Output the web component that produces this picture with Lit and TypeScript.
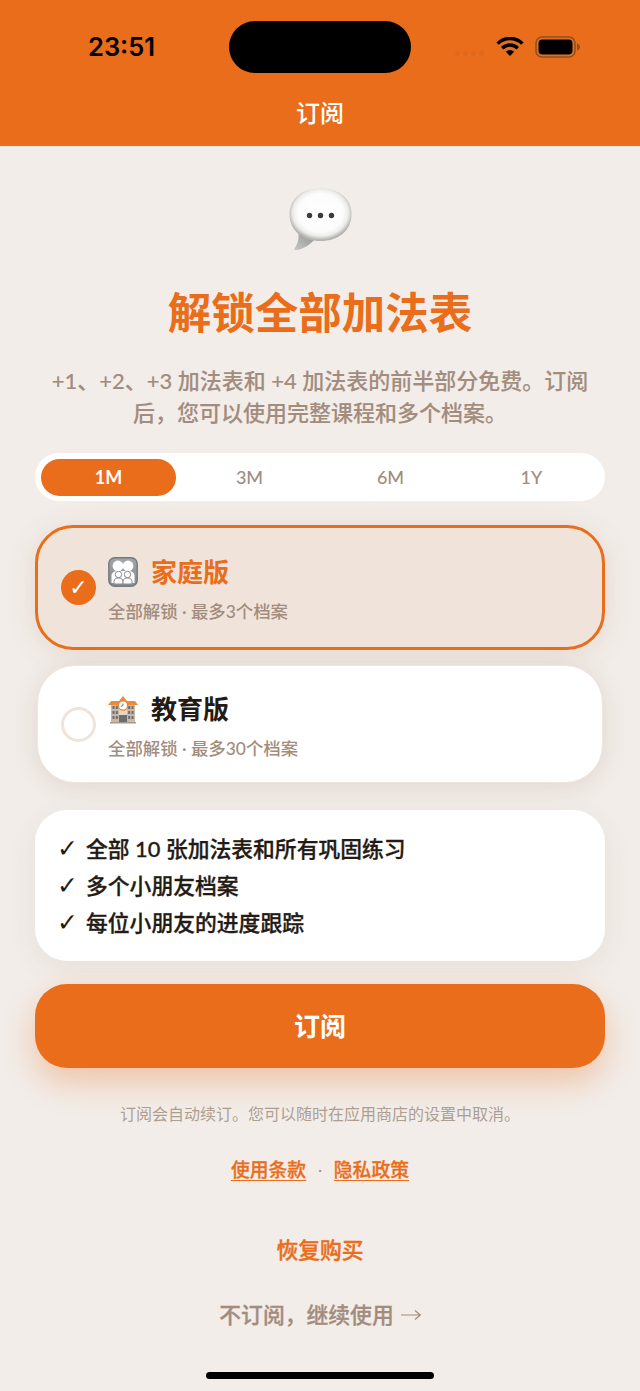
import { LitElement, html, css, svg } from 'lit';
import { customElement, state } from 'lit/decorators.js';

const bubble = svg`
  <defs>
    <radialGradient id="bub" cx="50%" cy="46%" r="52%">
      <stop offset="0" stop-color="#fff"/>
      <stop offset=".7" stop-color="#fcfcfc"/>
      <stop offset=".86" stop-color="#ececea"/>
      <stop offset="1" stop-color="#b3b3b0"/>
    </radialGradient>
    <linearGradient id="tail" x1="0" y1="1" x2=".8" y2="0">
      <stop offset="0" stop-color="#c6c6c3"/>
      <stop offset="1" stop-color="#8d8f8c"/>
    </linearGradient>
  </defs>
  <path d="M9 40 C10.500 50 9 56 5.500 60.500 C5 61.500 5.500 62 6.500 62 C14 61.500 21 57 27 50 Z" fill="url(#tail)"/>
  <path d="M31.500 0.500 C49 0.500 62.500 10 62.500 26 C62.500 43 49 53 31.500 53 C14 53 0.500 43 0.500 26 C0.500 10 14 0.500 31.500 0.500 Z" fill="url(#bub)"/>
  <circle cx="20.500" cy="27.500" r="2.700" fill="#3e3a39"/>
  <circle cx="31.500" cy="27.500" r="2.700" fill="#3e3a39"/>
  <circle cx="42.500" cy="27.500" r="2.700" fill="#3e3a39"/>
`;

const family = svg`
  <defs>
    <linearGradient id="fam" x1="0" y1="0" x2="0" y2="1">
      <stop offset="0" stop-color="#a4a6a8"/>
      <stop offset="1" stop-color="#868b8f"/>
    </linearGradient>
  </defs>
  <rect x=".8" y=".8" width="28.400" height="28.400" rx="6" fill="url(#fam)" stroke="#757a7e" stroke-width="1.400"/>
  <g fill="#fff">
    <circle cx="10" cy="9" r="5.400"/>
    <circle cx="20" cy="9" r="5.400"/>
    <path d="M3.500 26 V19 C3.500 15.500 6 14 10 14 H20 C24 14 26.500 15.500 26.500 19 V26 Z"/>
  </g>
  <g fill="#fff" stroke="#868b8f" stroke-width="1">
    <circle cx="10.500" cy="17.500" r="3.200"/>
    <circle cx="19.500" cy="17.500" r="3.200"/>
    <path d="M6 27 V24.500 C6 22 8 21 10.500 21 C13 21 15 22 15 24.500 V27 Z"/>
    <path d="M15 27 V24.500 C15 22 17 21 19.500 21 C22 21 24 22 24 24.500 V27 Z"/>
  </g>
`;

const school = svg`
  <rect x="3" y="9" width="24" height="20" fill="#c9b9a8"/>
  <rect x="11" y="7" width="8" height="22" fill="#e3d6c6"/>
  <path d="M0 11 L3 7 H11 L15 2 L19 7 H27 L30 11 Z" fill="#ee8a3c"/>
  <circle cx="15" cy="11.500" r="4.600" fill="#fff" stroke="#e9853a" stroke-width="1.200"/>
  <path d="M15 9.500 V11.500 L12.800 12.500" stroke="#555" stroke-width=".8" fill="none"/>
  <g fill="#6d6d70">
    <rect x="4.500" y="12" width="2" height="3"/><rect x="7.800" y="12" width="2" height="3"/>
    <rect x="4.500" y="17" width="2" height="3"/><rect x="7.800" y="17" width="2" height="3"/>
    <rect x="4.500" y="22" width="2" height="3"/><rect x="7.800" y="22" width="2" height="3"/>
    <rect x="20.200" y="12" width="2" height="3"/><rect x="23.500" y="12" width="2" height="3"/>
    <rect x="20.200" y="17" width="2" height="3"/><rect x="23.500" y="17" width="2" height="3"/>
    <rect x="20.200" y="22" width="2" height="3"/><rect x="23.500" y="22" width="2" height="3"/>
    <rect x="11" y="21" width="8" height="8"/>
  </g>
  <rect x="2" y="28" width="26" height="1.500" fill="#a8998a"/>
`;

@customElement('app-root')
export class AppRoot extends LitElement {
  static styles = css`
    :host {
      display: block;
      width: 640px;
      height: 1391px;
      overflow: hidden;
      position: relative;
      background: #f2ede9;
      font-family: 'Lato', 'Noto Sans CJK SC', sans-serif;
      color: #241a14;
    }
    .top {
      height: 147px;
      box-sizing: border-box;
      background: #e96d1a;
      border-bottom: 1px solid #ece3dc;
      display: flex;
      flex-direction: column;
    }
    .status {
      height: 94px;
      display: flex;
      align-items: flex-start;
      padding: 21px 59px 0 88px;
      box-sizing: border-box;
    }
    .time {
      width: 141px;
      margin-top: 10px;
      font-family: 'Inter', sans-serif;
      font-size: 25.500px;
      line-height: 32px;
      font-weight: 600;
      color: #000;
    }
    .island {
      width: 182px;
      height: 52px;
      border-radius: 26px;
      background: #000;
    }
    .dots {
      display: flex;
      gap: 3px;
      margin: 30px 0 0 44px;
    }
    .dots i {
      width: 5px;
      height: 5px;
      border-radius: 50%;
      background: #dd6a1e;
    }
    .wifi {
      margin: 16px 0 0 12px;
    }
    .battery {
      margin: 15px 0 0 11px;
    }
    .nav {
      margin-top: -1px;
      text-align: center;
      color: #fff;
      font-size: 24px;
      line-height: 40px;
      font-weight: 500;
    }
    .page {
      padding: 0 35px;
      display: flex;
      flex-direction: column;
    }
    .emoji {
      display: block;
      margin: 41px auto 0;
      width: 63px;
      height: 63px;
    }
    h1 {
      margin: 31px 0 0;
      text-align: center;
      font-size: 43.500px;
      line-height: 60px;
      font-weight: 700;
      color: #e96d1a;
    }
    .lead {
      margin: 23px 0 0;
      text-align: center;
      font-size: 22px;
      line-height: 32px;
      font-weight: 500;
      color: #a28c7e;
      -webkit-text-stroke: 0.1px currentColor;
    }
    .seg {
      margin-top: 24px;
      height: 48px;
      box-sizing: border-box;
      padding: 6px;
      display: flex;
      gap: 6px;
      border-radius: 24px;
      background: #fff;
    }
    .seg span {
      flex: 1;
      height: 37px;
      border-radius: 18.500px;
      text-align: center;
      font-size: 18px;
      line-height: 37px;
      font-weight: 500;
      color: #a28c7e;
    }
    .seg .on {
      background: #e96d1a;
      color: #fff;
      font-weight: 700;
    }
    .plan {
      box-sizing: border-box;
      display: flex;
      align-items: center;
      border-radius: 38px;
      background: #fff;
    }
    .plan.family {
      margin-top: 24px;
      height: 125px;
      padding: 0 0 0 23px;
      background: #f0e3da;
      border: 3px solid #e96d1a;
      box-shadow: 0 4px 30px rgba(150, 90, 50, 0.13);
    }
    .plan.edu {
      margin: 15px 2px 0;
      height: 118px;
      padding: 0 0 0 23px;
      border: 1px solid #f2e6dc;
      box-shadow: 0 4px 24px rgba(120, 80, 50, 0.14);
    }
    .radio {
      box-sizing: border-box;
      flex: none;
      width: 35px;
      height: 35px;
      border-radius: 50%;
      border: 3.500px solid #f0e3d8;
      display: flex;
      align-items: center;
      justify-content: center;
    }
    .family .radio {
      border: 0;
      background: #e96d1a;
      color: #fff;
      font-family: 'DejaVu Sans', sans-serif;
      font-size: 22px;
    }
    .info {
      margin: 3px 0 0 12px;
    }
    .name {
      display: flex;
      align-items: center;
      gap: 13px;
      font-size: 26px;
      line-height: 36px;
      font-weight: 700;
    }
    .family .name {
      color: #e96d1a;
    }
    .name svg {
      display: block;
    }
    .sub {
      margin-top: 10px;
      font-size: 17.400px;
      line-height: 24px;
      font-weight: 500;
      color: #a28c7e;
    }
    .feat {
      margin-top: 27px;
      height: 151px;
      box-sizing: border-box;
      padding: 20px 22px;
      border-radius: 32px;
      background: #fff;
      box-shadow: 0 8px 28px rgba(120, 80, 50, 0.08);
      font-size: 21.800px;
      line-height: 37px;
      font-weight: 500;
      -webkit-text-stroke: 0.3px currentColor;
    }
    .feat div {
      display: flex;
    }
    .feat b {
      width: 29px;
      font-family: 'DejaVu Sans', sans-serif;
      font-weight: 400;
      font-size: 25px;
      -webkit-text-stroke: 0;
    }
    .cta {
      margin-top: 23px;
      height: 84px;
      border-radius: 32px;
      background: #e96d1a;
      box-shadow: 0 14px 32px rgba(233, 109, 26, 0.32);
      text-align: center;
      color: #fff;
      font-size: 26px;
      line-height: 84px;
      font-weight: 700;
    }
    .fine {
      margin-top: 34px;
      text-align: center;
      font-size: 16px;
      line-height: 24px;
      color: #ae9e92;
    }
    .links {
      margin-top: 30px;
      display: flex;
      justify-content: center;
      gap: 12px;
      font-size: 18.800px;
      line-height: 28px;
      font-weight: 500;
      color: #e96d1a;
      -webkit-text-stroke: 0.3px currentColor;
    }
    .links u {
      text-underline-offset: 3px;
    }
    .links span {
      color: #a28c7e;
      font-size: 14px;
      -webkit-text-stroke: 0;
    }
    .restore {
      margin-top: 50px;
      text-align: center;
      font-size: 21.800px;
      line-height: 32px;
      font-weight: 500;
      color: #e96d1a;
      -webkit-text-stroke: 0.4px currentColor;
    }
    .skip {
      margin-top: 33px;
      display: flex;
      justify-content: center;
      align-items: center;
      gap: 7px;
      font-size: 21.800px;
      line-height: 32px;
      font-weight: 500;
      color: #a28c7e;
      -webkit-text-stroke: 0.3px currentColor;
    }
    .home {
      position: absolute;
      left: 206px;
      bottom: 12px;
      width: 228px;
      height: 7px;
      border-radius: 4px;
      background: #000;
    }
  `;

  @state() private terms = ['1M', '3M', '6M', '1Y'];
  @state() private features = ['全部 10 张加法表和所有巩固练习', '多个小朋友档案', '每位小朋友的进度跟踪'];

  render() {
    return html`
      <div class="top">
        <div class="status">
          <div class="time">23:51</div>
          <div class="island"></div>
          <div class="dots"><i></i><i></i><i></i><i></i></div>
          <svg class="wifi" width="28" height="19" viewBox="0 0 28 19">
            <path d="M14 19 L9.800 14.800 A6 6 0 0 1 18.200 14.800 Z" fill="#000"/>
            <path d="M6.200 11.200 A11 11 0 0 1 21.800 11.200 M1.600 6.600 A17.500 17.500 0 0 1 26.400 6.600" stroke="#000" stroke-width="3.400" fill="none"/>
          </svg>
          <svg class="battery" width="46" height="22" viewBox="0 0 46 22">
            <rect x="1" y="1" width="39" height="20" rx="6" fill="none" stroke="#8a5228" stroke-width="1.600"/>
            <rect x="3.500" y="3.500" width="34" height="15" rx="4" fill="#000"/>
            <path d="M42 7.500 C44 8 45 9.500 45 11 C45 12.500 44 14 42 14.500 Z" fill="#8a5228"/>
          </svg>
        </div>
        <div class="nav">订阅</div>
      </div>
      <div class="page">
        <svg class="emoji" viewBox="0 0 63 63">${bubble}</svg>
        <h1>解锁全部加法表</h1>
        <p class="lead">+1、+2、+3 加法表和 +4 加法表的前半部分免费。订阅<br />后，您可以使用完整课程和多个档案。</p>
        <div class="seg">
          ${this.terms.map((t, i) => html`<span class=${i === 0 ? 'on' : ''}>${t}</span>`)}
        </div>
        <div class="plan family">
          <div class="radio">✓</div>
          <div class="info">
            <div class="name"><svg width="30" height="30" viewBox="0 0 30 30">${family}</svg>家庭版</div>
            <div class="sub">全部解锁 · 最多3个档案</div>
          </div>
        </div>
        <div class="plan edu">
          <div class="radio"></div>
          <div class="info">
            <div class="name"><svg width="30" height="30" viewBox="0 0 30 30">${school}</svg>教育版</div>
            <div class="sub">全部解锁 · 最多30个档案</div>
          </div>
        </div>
        <div class="feat">
          ${this.features.map((f) => html`<div><b>✓</b>${f}</div>`)}
        </div>
        <div class="cta">订阅</div>
        <div class="fine">订阅会自动续订。您可以随时在应用商店的设置中取消。</div>
        <div class="links"><u>使用条款</u><span>·</span><u>隐私政策</u></div>
        <div class="restore">恢复购买</div>
        <div class="skip">
          不订阅，继续使用
          <svg width="20" height="12" viewBox="0 0 20 12">
            <path d="M0 6 H19 M14 1.500 L19.300 6 L14 10.500" stroke="#a28c7e" stroke-width="1.200" fill="none"/>
          </svg>
        </div>
      </div>
      <div class="home"></div>
    `;
  }
}
